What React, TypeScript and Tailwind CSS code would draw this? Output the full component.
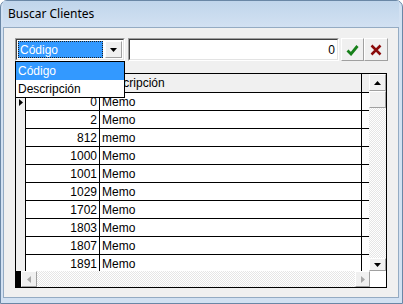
const ROWS: [number, string][] = [
  [0, "Memo"],
  [2, "Memo"],
  [812, "memo"],
  [1000, "Memo"],
  [1001, "Memo"],
  [1029, "Memo"],
  [1702, "Memo"],
  [1803, "Memo"],
  [1807, "Memo"],
  [1891, "Memo"],
];

const RAISED =
  "border border-t-white border-l-white border-r-[#a0a0a0] border-b-[#a0a0a0] bg-[#f0f0f0]";
const TRACK =
  "bg-[repeating-conic-gradient(#ffffff_0_25%,#e6e6e6_0_50%)] bg-[length:2px_2px]";

function Tri({ dir, color }: { dir: "up" | "down" | "left" | "right"; color: string }) {
  const pts = {
    up: "0,4 7,4 3.5,0",
    down: "0,0 7,0 3.5,4",
    left: "4,0 4,7 0,3.5",
    right: "0,0 0,7 4,3.5",
  }[dir];
  const vertical = dir === "up" || dir === "down";
  return (
    <svg width={vertical ? 7 : 4} height={vertical ? 4 : 7} viewBox={vertical ? "0 0 7 4" : "0 0 4 7"}>
      <polygon points={pts} fill={color} />
    </svg>
  );
}

export default function App() {
  return (
    <div className="w-[403px] h-[304px] overflow-hidden bg-white font-['Liberation_Sans',Arial,sans-serif] text-[12px] text-black">
      <div className="flex h-full flex-col rounded-t-[7px] border border-[#6a87a6] bg-[#d2e1f2] pl-[2px] pr-[3px] pb-[5px]">
        {/* Title bar */}
        <div className="flex h-[26px] shrink-0 items-center bg-gradient-to-b from-[#c0d5eb] to-[#d2e1f2] pl-[5px] font-['Noto_Sans',sans-serif] text-[12px] text-black">
          Buscar Clientes
        </div>

        {/* Client area */}
        <div className="flex flex-1 flex-col border border-[#94abc3] bg-[#f0f0f0] pl-[11px] pt-[10px]">
          {/* Search row */}
          <div className="flex h-[23px] items-stretch">
            <div className="relative w-[110px]">
              <div className="flex h-full border border-t-[#a0a0a0] border-l-[#a0a0a0] border-r-white border-b-white">
                <div className="flex flex-1 border border-t-[#404040] border-l-[#404040] border-r-[#e3e3e3] border-b-[#e3e3e3] bg-white p-[1px]">
                  <div className="flex flex-1 items-center border border-dotted border-[#1f1f1f] bg-[#3399ff] pl-[1px] pt-[1px] text-white">
                    Código
                  </div>
                  <div className={`ml-[2px] flex w-[17px] items-center justify-center ${RAISED}`}>
                    <Tri dir="down" color="#000" />
                  </div>
                </div>
              </div>

              {/* Open list */}
              <div className="absolute left-0 top-full z-10 w-[110px] border border-black bg-white">
                <div className="h-[18px] bg-[#3399ff] pl-[2px] leading-[19px] text-white">Código</div>
                <div className="h-[17px] pl-[2px] leading-[18px]">Descripción</div>
              </div>
            </div>

            <div className="ml-[3px] flex w-[211px] border border-t-[#a0a0a0] border-l-[#a0a0a0] border-r-white border-b-white">
              <div className="flex flex-1 items-center justify-end border border-t-[#404040] border-l-[#404040] border-r-[#e3e3e3] border-b-[#e3e3e3] bg-white pr-[2px] pt-[1px]">
                0
              </div>
            </div>

            <button className={`ml-[2px] flex w-[23px] items-center justify-center ${RAISED} border-r-[#8a8a8a] border-b-[#8a8a8a]`}>
              <svg width="13" height="12" viewBox="0 0 13 12">
                <path d="M1.5 6.5 L5 10 L11.5 2" stroke="#17801a" strokeWidth="2.8" fill="none" />
              </svg>
            </button>
            <button className={`flex w-[24px] items-center justify-center ${RAISED} border-r-[#8a8a8a] border-b-[#8a8a8a]`}>
              <svg width="12" height="12" viewBox="0 0 12 12">
                <path d="M1.5 1.5 L10.5 10.5 M10.5 1.5 L1.5 10.5" stroke="#8b0a0a" strokeWidth="2.5" fill="none" />
              </svg>
            </button>
          </div>

          {/* Grid */}
          <div className="mt-[12px] flex h-[215px] w-[372px] flex-col border border-black bg-white">
            <div className="flex h-[197px]">
              <div className="flex w-[353px] flex-col overflow-hidden">
                {/* Header */}
                <div className="flex h-[19px] shrink-0 border-b border-black bg-[#f0f0f0]">
                  <div className="w-[10px] border-r border-black" />
                  <div className="w-[74px] border-r border-black" />
                  <div className="w-[262px] border-r border-black pl-[2px] leading-[19px]">Descripción</div>
                  <div className="flex-1" />
                </div>
                {ROWS.map(([code, desc], i) => (
                  <div key={i} className="flex h-[18px] shrink-0">
                    <div className="flex w-[10px] shrink-0 items-center justify-center border-r border-black bg-[#f0f0f0]">
                      {i === 0 && <Tri dir="right" color="#000" />}
                    </div>
                    <div className="flex flex-1 border-b border-black">
                      <div className="w-[74px] border-r border-black pr-[2px] text-right leading-[19px]">{code}</div>
                      <div className="w-[262px] border-r border-black pl-[2px] leading-[19px]">{desc}</div>
                      <div className="flex-1" />
                    </div>
                  </div>
                ))}
              </div>

              {/* Vertical scrollbar */}
              <div className="flex w-[17px] flex-col">
                <div className={`flex h-[17px] items-center justify-center ${RAISED}`}>
                  <Tri dir="up" color="#000" />
                </div>
                <div className={`h-[17px] ${RAISED}`} />
                <div className={`flex-1 ${TRACK}`} />
                <div className={`flex h-[13px] items-center justify-center ${RAISED}`}>
                  <Tri dir="down" color="#000" />
                </div>
              </div>
            </div>

            {/* Horizontal scrollbar */}
            <div className="flex h-[16px]">
              <div className="w-[5px] bg-black" />
              <div className={`flex w-[16px] items-center justify-center ${RAISED}`}>
                <Tri dir="left" color="#a8a8a8" />
              </div>
              <div className={`flex-1 ${TRACK}`} />
              <div className={`flex w-[15px] items-center justify-center ${RAISED}`}>
                <Tri dir="right" color="#a8a8a8" />
              </div>
              <div className="w-[16px] bg-white" />
            </div>
          </div>
        </div>
      </div>
    </div>
  );
}
